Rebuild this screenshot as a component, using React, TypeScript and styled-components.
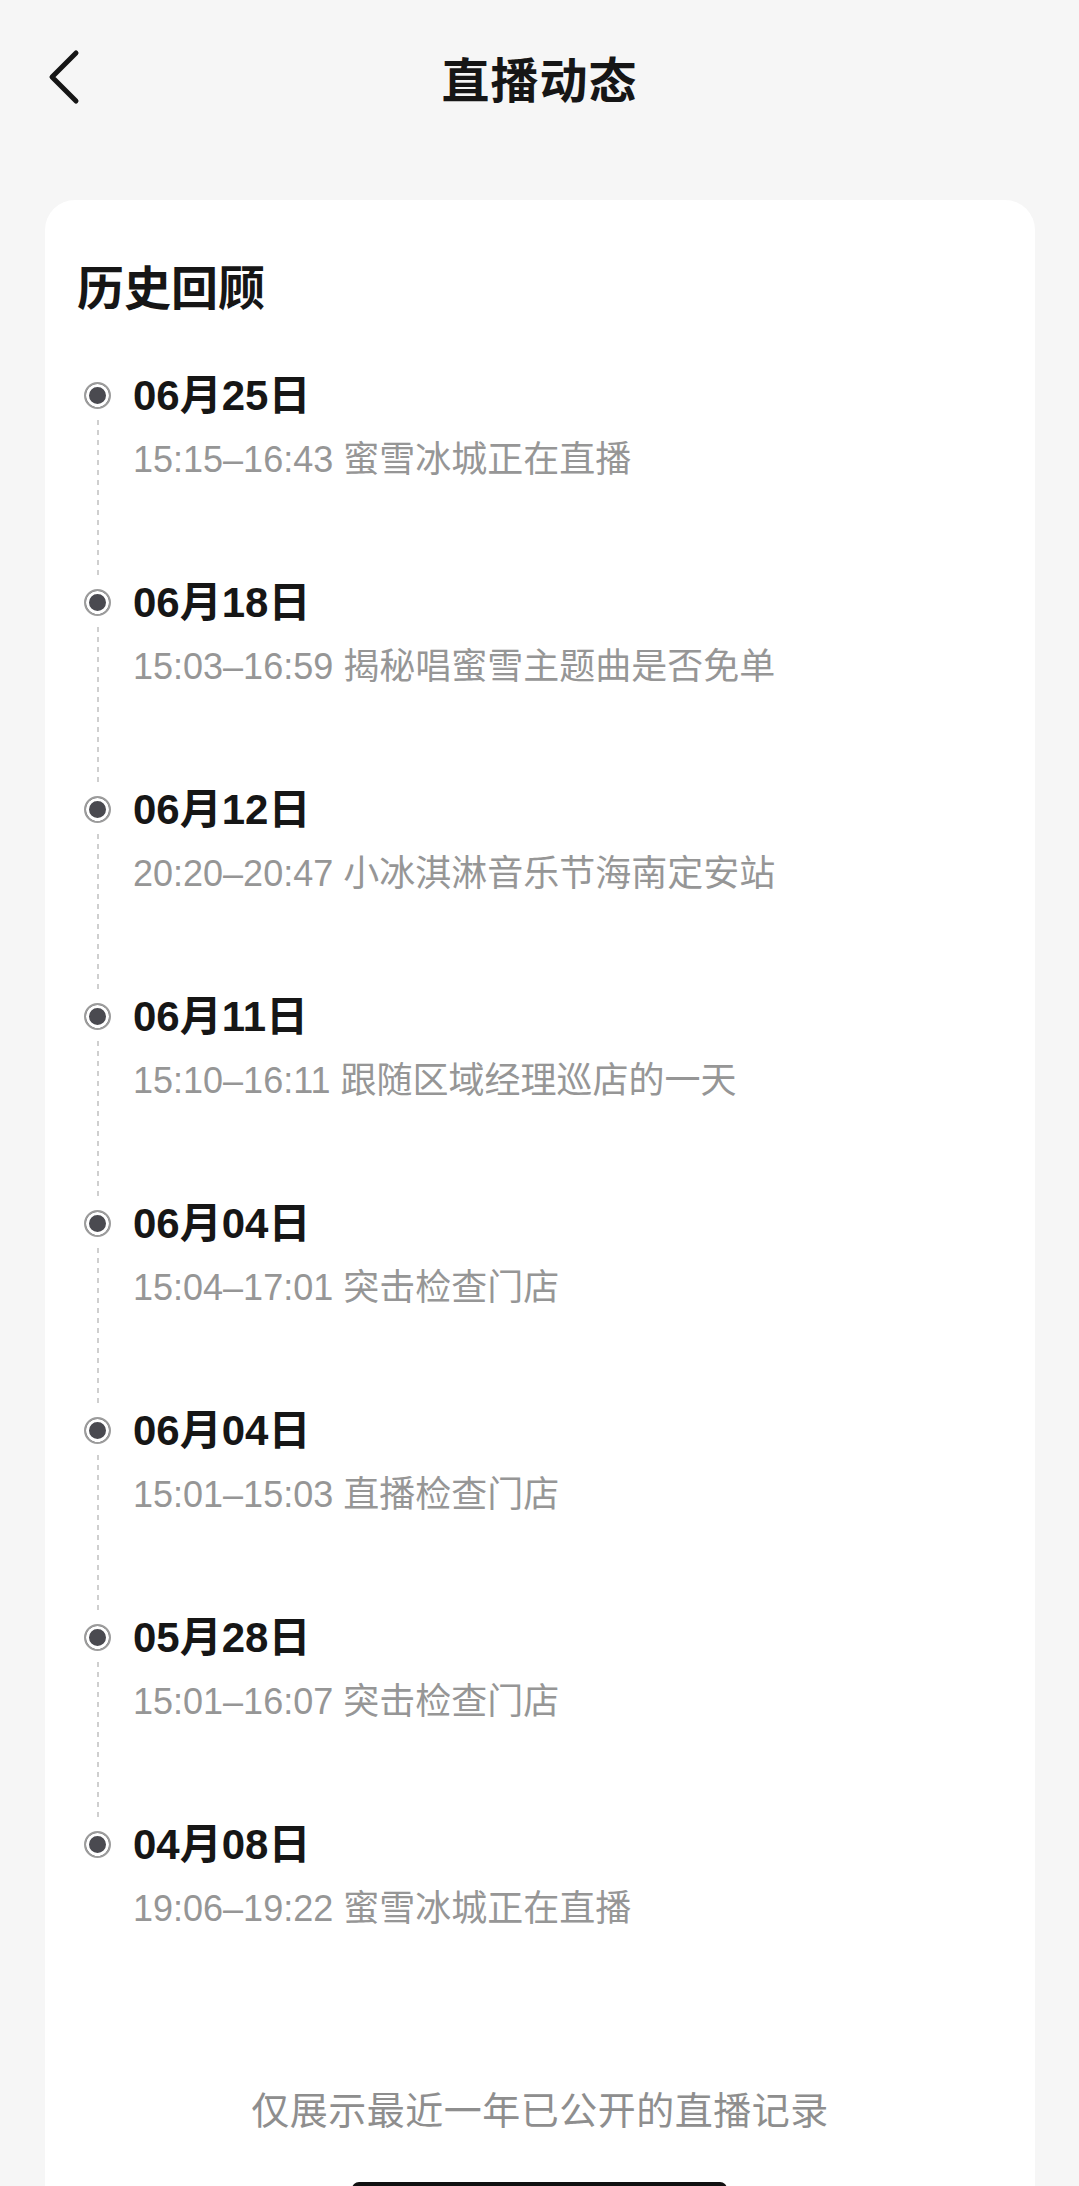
import React from "react";
import styled, { createGlobalStyle } from "styled-components";

const GlobalStyle = createGlobalStyle`
  html, body {
    margin: 0;
    padding: 0;
    background: #f6f6f6;
  }
  body {
    font-family: "Liberation Sans", "Noto Sans CJK SC", sans-serif;
    -webkit-font-smoothing: antialiased;
  }
`;

const Screen = styled.div`
  position: relative;
  width: 1079px;
  height: 2186px;
  overflow: hidden;
  display: flex;
  flex-direction: column;
  background: #f6f6f6;
`;

const Header = styled.header`
  flex: none;
  height: 154px;
  display: grid;
  grid-template-columns: 140px 1fr 140px;
  align-items: center;
`;

const BackButton = styled.button`
  border: none;
  background: none;
  padding: 0 0 0 48px;
  display: flex;
  align-items: center;
  height: 60px;
  cursor: pointer;
`;

const Title = styled.h1`
  margin: 0;
  text-align: center;
  font-size: 48px;
  font-weight: 700;
  color: #161616;
  letter-spacing: 1px;
`;

const Card = styled.section`
  flex: none;
  margin: 46px 44px 0 45px;
  background: #ffffff;
  border-radius: 30px;
  padding: 59px 32px 120px 32px;
`;

const SectionTitle = styled.h2`
  margin: 0 0 49px 0;
  font-size: 47px;
  line-height: 60px;
  font-weight: 700;
  color: #161616;
`;

const Timeline = styled.ol`
  list-style: none;
  margin: 0;
  padding: 0;
`;

const Item = styled.li`
  display: grid;
  grid-template-columns: 40px 1fr;
  column-gap: 16px;
  height: 207px;
`;

const Rail = styled.div`
  display: flex;
  flex-direction: column;
  align-items: center;
  padding-top: 14px;
`;

const Dot = styled.span`
  width: 27px;
  height: 27px;
  box-sizing: border-box;
  border-radius: 50%;
  border: 2px solid #9c9c9c;
  background: #4a4a50;
  box-shadow: inset 0 0 0 3px #ffffff;
  flex: none;
`;

const Connector = styled.span<{ $hidden?: boolean }>`
  flex: 1;
  width: 2px;
  margin: 11px 0 0 2px;
  visibility: ${(p) => (p.$hidden ? "hidden" : "visible")};
  background-image: linear-gradient(to bottom, #cfcfcf 50%, transparent 50%);
  background-size: 2px 10px;
`;

const Body = styled.div`
  display: flex;
  flex-direction: column;
`;

const DateText = styled.div`
  font-size: 42px;
  line-height: 56px;
  font-weight: 700;
  color: #161616;
`;

const Sub = styled.div`
  margin-top: 10px;
  font-size: 36px;
  line-height: 52px;
  color: #969696;
  white-space: nowrap;
`;

const Footer = styled.p`
  margin: 61px 0 0 0;
  text-align: center;
  font-size: 38px;
  line-height: 52px;
  color: #8e8e8e;
  letter-spacing: 0.5px;
`;

const HomeIndicator = styled.div`
  position: absolute;
  left: 352px;
  bottom: -10px;
  width: 375px;
  height: 14px;
  border-radius: 7px;
  background: #111111;
`;

const records = [
  { date: "06月25日", time: "15:15–16:43", title: "蜜雪冰城正在直播" },
  { date: "06月18日", time: "15:03–16:59", title: "揭秘唱蜜雪主题曲是否免单" },
  { date: "06月12日", time: "20:20–20:47", title: "小冰淇淋音乐节海南定安站" },
  { date: "06月11日", time: "15:10–16:11", title: "跟随区域经理巡店的一天" },
  { date: "06月04日", time: "15:04–17:01", title: "突击检查门店" },
  { date: "06月04日", time: "15:01–15:03", title: "直播检查门店" },
  { date: "05月28日", time: "15:01–16:07", title: "突击检查门店" },
  { date: "04月08日", time: "19:06–19:22", title: "蜜雪冰城正在直播" },
];

const BackIcon = () => (
  <svg width="34" height="56" viewBox="0 0 34 56" fill="none">
    <path
      d="M28 4 L4 28 L28 52"
      stroke="#161616"
      strokeWidth="5"
      strokeLinecap="round"
      strokeLinejoin="round"
    />
  </svg>
);

export default function App() {
  return (
    <Screen>
      <GlobalStyle />
      <Header>
        <BackButton aria-label="返回">
          <BackIcon />
        </BackButton>
        <Title>直播动态</Title>
        <span />
      </Header>
      <Card>
        <SectionTitle>历史回顾</SectionTitle>
        <Timeline>
          {records.map((r, i) => (
            <Item key={i}>
              <Rail>
                <Dot />
                <Connector $hidden={i === records.length - 1} />
              </Rail>
              <Body>
                <DateText>{r.date}</DateText>
                <Sub>
                  {r.time} {r.title}
                </Sub>
              </Body>
            </Item>
          ))}
        </Timeline>
        <Footer>仅展示最近一年已公开的直播记录</Footer>
      </Card>
      <HomeIndicator />
    </Screen>
  );
}
